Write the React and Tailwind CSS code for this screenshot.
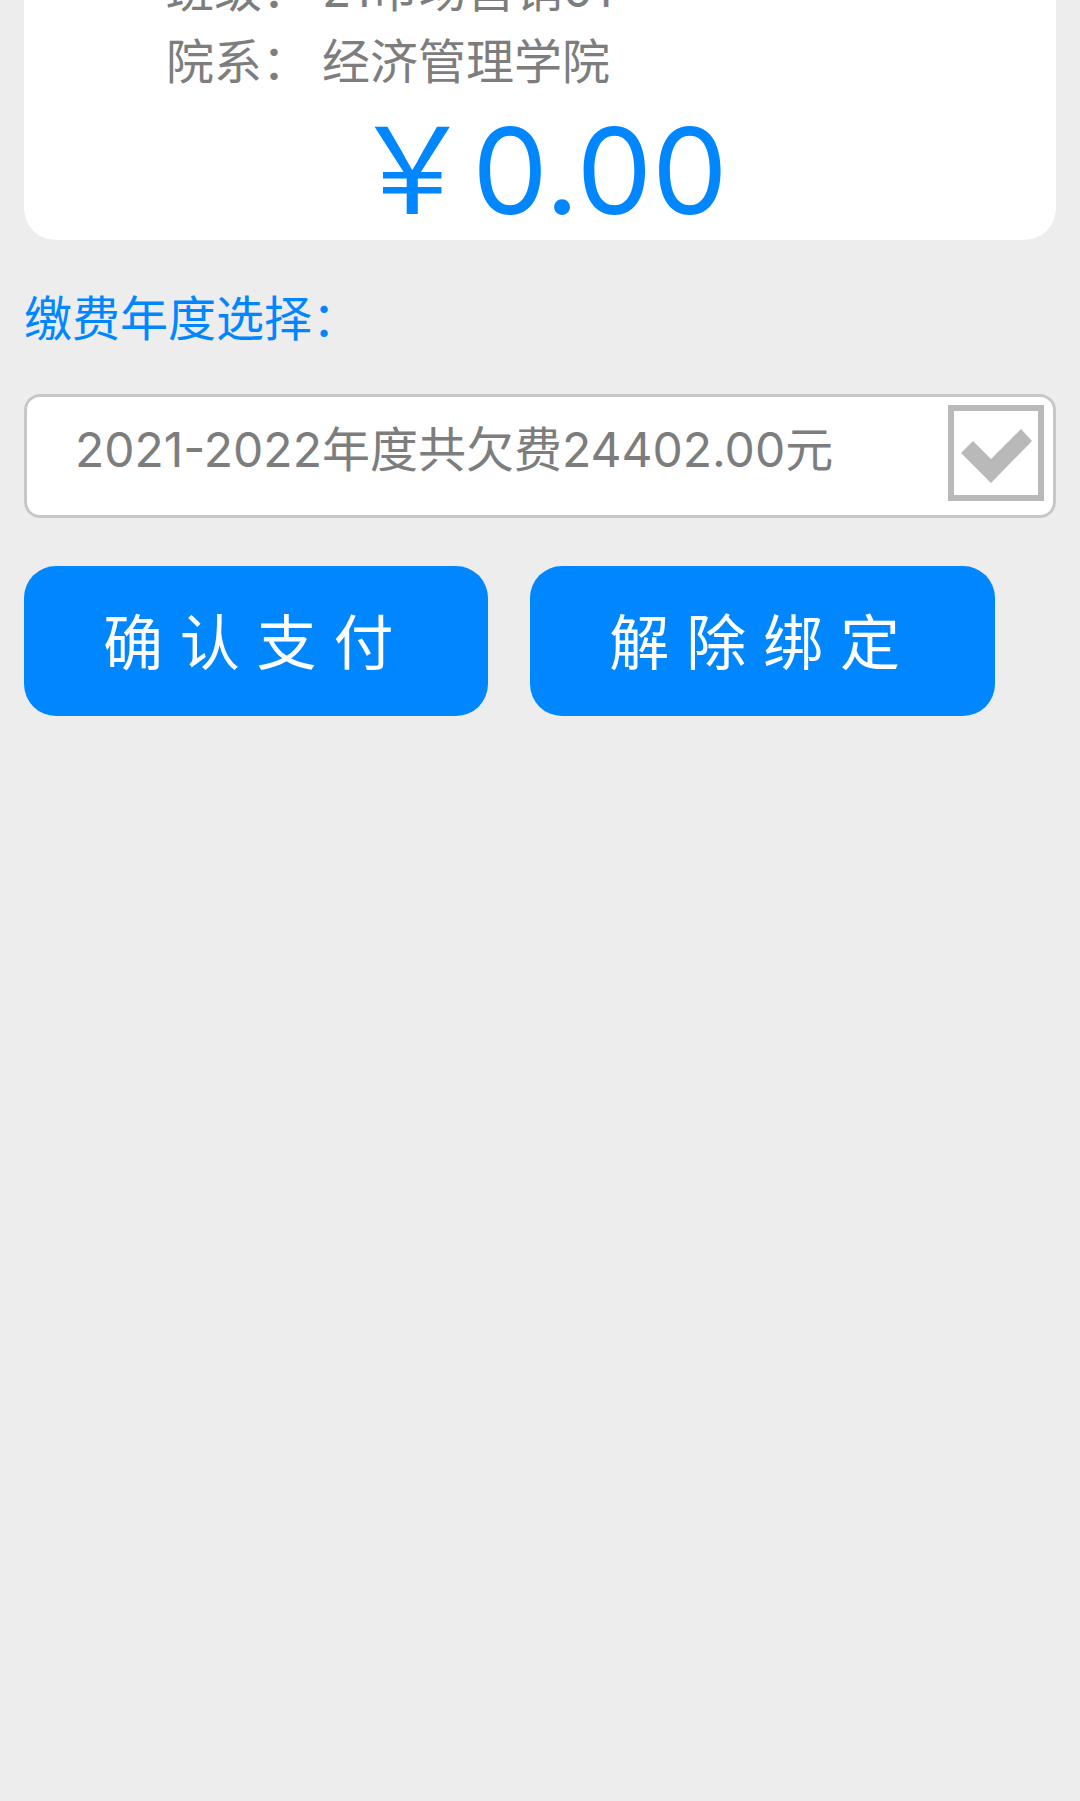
import { useState } from "react";

const details = [
  { label: "班级：", value: "21市场营销01" },
  { label: "院系：", value: "经济管理学院" },
];

function YearOption({ id, text, checked, onChange }) {
  return (
    <div className="flex items-start justify-between rounded-2xl border-3 border-[#cbc6c6] bg-white pt-2 pr-[9px] pb-3.5 pl-12">
      <label htmlFor={id} className="py-2.5 text-[48px] leading-[70px] text-[#7d7d7d]">
        {text}
      </label>
      <span className="relative size-24 shrink-0">
        <input
          id={id}
          type="checkbox"
          checked={checked}
          onChange={onChange}
          className="block size-24 appearance-none border-6 border-[#b9b9b9] bg-white checked:border-[#0087ff]"
        />
        <svg
          viewBox="0 0 96 96"
          aria-hidden="true"
          className={
            checked
              ? "pointer-events-none absolute inset-0 size-24 text-[#0087ff]"
              : "pointer-events-none absolute inset-0 size-24 text-[#b9b9b9]"
          }
        >
          <path fill="currentColor" d="M25 36 43 54 73 24 84 36 43 78 13 48Z" />
        </svg>
      </span>
    </div>
  );
}

function ActionButton({ children }) {
  return (
    <button
      type="button"
      className="w-[45%] rounded-[32px] bg-[#0087ff] pt-8 pr-4 pb-7 text-center text-[60px] leading-[90px] whitespace-nowrap text-white"
    >
      {children}
    </button>
  );
}

export default function App() {
  const [checked, setChecked] = useState(false);
  return (
    <main className="min-h-screen overflow-hidden bg-[#ededed] px-6 font-['Inter','Noto_Sans_CJK_SC',sans-serif]">
      <section className="-mt-[46px] rounded-b-[32px] bg-white">
        <dl className="pl-[142px] text-[48px] leading-[72px] text-[#7d7d7d]">
          {details.map((d) => (
            <div key={d.label} className="flex gap-3">
              <dt>{d.label}</dt>
              <dd>{d.value}</dd>
            </div>
          ))}
        </dl>
        <p className="pt-1 text-center text-[120px] leading-[138px] text-[#0087ff]">￥0.00</p>
      </section>

      <h2 className="mt-11 text-[48px] leading-[70px] text-[#0087ff]">缴费年度选择：</h2>

      <div className="mt-10">
        <YearOption
          id="year-2021"
          text="2021-2022年度共欠费24402.00元"
          checked={checked}
          onChange={(e) => setChecked(e.target.checked)}
        />
      </div>

      <div className="mt-12 flex gap-[42px]">
        <ActionButton>确 认 支 付</ActionButton>
        <ActionButton>解 除 绑 定</ActionButton>
      </div>
    </main>
  );
}
